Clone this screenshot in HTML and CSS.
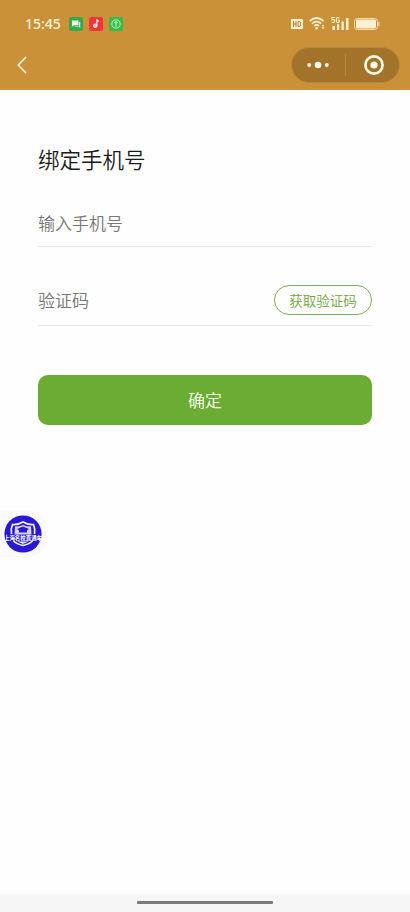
FILE: index.html
```html
<!DOCTYPE html>
<html lang="zh-CN">
<head>
<meta charset="utf-8">
<meta name="viewport" content="width=device-width, initial-scale=1">
<title>绑定手机号</title>
<link rel="stylesheet" href="styles.css">
</head>
<body>
<div class="app">
  <header class="header">
    <div class="status">
      <time class="clock">15:45</time>
      <div class="notices">
        <svg class="notice" viewBox="0 0 14 14"><rect width="14" height="14" rx="2.5" fill="#36a950"/><path d="M3 3.500h6.500v4.700H5L3 9.700z" fill="#f4ffe9"/><path d="M10.200 5h1v6L9.500 9.600H5.800V8.900h4.400z" fill="#f4ffe9"/></svg>
        <svg class="notice" viewBox="0 0 14 14"><rect width="14" height="14" rx="2.5" fill="#ee353c"/><circle cx="6.2" cy="8.8" r="1.8" fill="#ffb9a6" stroke="#fff0df"/><path d="M7.900 8.800V3l2 1.300" fill="none" stroke="#fff0df" stroke-width="1.300"/></svg>
        <svg class="notice" viewBox="0 0 14 14"><rect width="14" height="14" rx="2.5" fill="#35be4e"/><circle cx="7" cy="7" r="4.1" fill="none" stroke="#c6efb0" stroke-width=".9"/><path d="M7 10V4.800M5 6l2-1.500L9 6" fill="none" stroke="#d9f5c6"/></svg>
      </div>
      <div class="signals">
        <svg class="hd" viewBox="0 0 12 10"><rect width="12" height="10" rx="1" fill="#fff0cf"/><path d="M2.500 2v6M5 2v6M2.500 5H5M7 2.500h1.200q1.600 0 1.600 2.500T8.200 7.500H7z" fill="none" stroke="#a87832" stroke-width="1"/></svg>
        <svg class="wifi" viewBox="0 0 17 13"><g fill="none" stroke="#fff0cf" stroke-width="1.700"><path d="M.7 4Q7.500-2 14.500 4M3 6.600Q7.600 2.500 12.200 6.600M5.200 9Q7.600 6.900 10 9"/></g><circle cx="7.6" cy="11.2" r="1.3" fill="#fff0cf"/><path d="M12.500 9.200 14 7.500l1.500 1.700zM12.500 10.300h3L14 12z" fill="#fff0cf"/></svg>
        <svg class="cell" viewBox="0 0 19 13"><path d="M3.700.5H1V2.700Q3.700 2.200 3.700 4T.7 5.300M8.300 1.200Q5.300-.6 5.300 3t2.900 2V3.200H6.900" fill="none" stroke="#fff0cf" stroke-width="1.100"/><path d="M1.500 9H4v4H1.500zM6 7.200h2.200V13H6zM10.500 4.500h2.300V13h-2.300zM15 1h2.500v12H15z" fill="#fff0cf"/></svg>
        <svg class="battery" viewBox="0 0 26 12"><rect x=".5" y=".5" width="23" height="11" rx="2.8" fill="none" stroke="#f5dca9"/><rect x="2" y="1.500" width="20" height="9" rx="1.4" fill="#fff0cf"/><path d="M24.800 4v4" stroke="#f5dca9" stroke-width="1.300"/></svg>
      </div>
    </div>
    <nav class="nav">
      <svg class="back" viewBox="0 0 10 18"><path d="M9 1 1.300 9 9 17" fill="none" stroke="#fff5e4" stroke-width="1.600"/></svg>
      <div class="capsule">
        <svg class="more" viewBox="0 0 22 8"><g fill="#fffbed"><circle cx="2.2" cy="4" r="1.9"/><circle cx="11" cy="4" r="3.3"/><circle cx="19.8" cy="4" r="1.9"/></g></svg>
        <span class="divider"></span>
        <svg class="close" viewBox="0 0 20 20"><circle cx="10" cy="10" r="8.6" fill="none" stroke="#fffbed" stroke-width="2.6"/><circle cx="10" cy="10" r="3.6" fill="#fffbed"/></svg>
      </div>
    </nav>
  </header>
  <main class="form">
    <h1 class="title">绑定手机号</h1>
    <div class="field phone">输入手机号</div>
    <div class="field code"><span>验证码</span><button class="get-code">获取验证码</button></div>
    <button class="submit">确定</button>
  </main>
  <div class="floating">
    <svg class="badge" viewBox="0 0 38 38"><circle cx="19" cy="19" r="18.6" fill="#2919d2"/><path d="M7.500 19Q6.500 14 8.500 9.500 14 10 19 7q5 3 10.500 2.500 2 4.500 1 9.500M9.500 26q3 3 9.500 4.500 6.500-1.500 9.500-4.500" fill="none" stroke="#f0f0ff" stroke-width="1.700"/><path d="M11 11.500q4.500 0 8-1.500 3.500 1.500 8 1.500l.5 8h-17z" fill="#d5d3fa"/><path d="m19 11.500 6 2.500-2 1.200v2.300h-8v-2.300L13 14z" fill="#2919d2"/><path d="M13 26.500h12L19 29z" fill="#dcdcff"/><text x="19" y="25" text-anchor="middle" textLength="38" lengthAdjust="spacingAndGlyphs">上海名校直通车</text></svg>
  </div>
  <footer class="home"><span class="home-bar"></span></footer>
</div>
</body>
</html>
```
FILE: styles.css
```css
* { box-sizing: border-box; }
body {
  margin: 0;
  background: #fefefe;
  font-family: "Noto Sans CJK SC", sans-serif;
  font-weight: 350;
}
svg { display: block; flex: none; }
button { font: inherit; padding: 0; }
.app {
  position: relative;
  display: flex;
  flex-direction: column;
  height: 912px;
  overflow: hidden;
}
.header { height: 90px; background: #cb9138; }
.status {
  display: flex;
  align-items: center;
  height: 47px;
  padding: 0 30px 0 25px;
}
.clock {
  width: 44px;
  padding-top: 1px;
  color: #fff5df;
  font: 500 14px/20px "Noto Sans", sans-serif;
}
.notices { display: flex; gap: 6px; padding-top: 1px; }
.notice { width: 14px; height: 14px; }
.signals { display: flex; align-items: center; margin-left: auto; }
.hd { width: 12px; height: 10px; margin-right: 6px; }
.wifi { width: 17px; height: 13px; margin-right: 5px; }
.cell { width: 19px; height: 13px; margin-right: 4px; }
.battery { width: 26px; height: 12px; }
.nav {
  display: flex;
  align-items: center;
  justify-content: space-between;
  height: 36px;
  padding: 0 10px 0 17px;
}
.back { width: 10px; height: 18px; }
.capsule {
  display: flex;
  align-items: center;
  width: 109px;
  height: 36px;
  padding: 0 15px;
  border: 1px solid #b9883f;
  border-radius: 18px;
  background: #a37329;
}
.more { width: 22px; height: 8px; }
.divider { width: 1px; height: 22px; margin: 0 18px 0 16px; background: #b5873f; }
.close { width: 20px; height: 20px; }
.form { flex: 1; padding: 52px 38px 0; }
.title {
  margin: 0;
  color: #1b1b1b;
  font-size: 21.5px;
  font-weight: 350;
  line-height: 34px;
}
.field {
  display: flex;
  align-items: center;
  justify-content: space-between;
  border-bottom: 1px solid #e9e9e9;
  color: #777;
  font-size: 17px;
}
.phone { height: 47px; margin-top: 24px; padding-bottom: 1px; }
.code { height: 51px; margin-top: 28px; }
.code span { padding-bottom: 1px; }
.get-code {
  width: 98px;
  height: 30px;
  border: 1.5px solid #7dae51;
  border-radius: 15px;
  background: transparent;
  color: #6da53e;
  font-size: 13.5px;
  line-height: 27px;
}
.submit {
  width: 100%;
  height: 50px;
  margin-top: 49px;
  padding-bottom: 1px;
  border: 0;
  border-radius: 10px;
  background: #6aad32;
  color: #fafff1;
  font-size: 17px;
}
.floating {
  position: absolute;
  top: 510px;
  left: 0;
  width: 47px;
  height: 47px;
  padding: 5px 0 0 4px;
  border-radius: 0 20px 20px 0;
  background: #fafafb;
}
.badge { width: 38px; height: 38px; overflow: visible; }
.badge text { fill: #fff; font-size: 5.8px; font-weight: 700; }
.home {
  display: flex;
  justify-content: center;
  height: 18px;
  padding-top: 7px;
  background: #f6f6f6;
}
.home-bar { width: 136px; height: 3px; border-radius: 1px; background: #7a7a7a; }
```
